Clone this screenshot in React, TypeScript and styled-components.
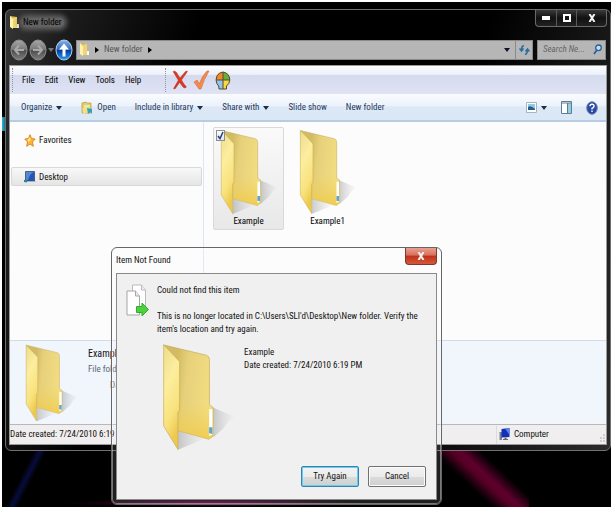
import React, { useId } from "react";
import styled, { createGlobalStyle } from "styled-components";

const GlobalStyle = createGlobalStyle`
  *, *::before, *::after { box-sizing: border-box; }
  body { margin: 0; background: #fff; }
  body, button, input { font-family: "Roboto Condensed", Roboto, "Liberation Sans", sans-serif; font-size: 9px; line-height: 13px; }
  button { padding: 0; border: 0; background: none; color: inherit; cursor: default; }
  svg { display: block; flex: none; }
`;

/* ---------- desktop and windows ---------- */

const Desktop = styled.div`
  position: relative;
  display: flex;
  min-height: 100vh;
  padding: 7px 0 56px 3px;
  border: 2px solid #fff;
  background:
    linear-gradient(90deg, #2ab4e0, transparent) 0 115px / 8px 14px no-repeat,
    radial-gradient(ellipse at center, rgba(130, 0, 90, 0.7), transparent 70%) 60px 100% / 300px 8px no-repeat,
    linear-gradient(117deg, transparent 42%, #080c3c 50%, transparent 58%) 0 100% / 50px 60px no-repeat,
    linear-gradient(43deg, transparent 34%, #560026 46%, #5e002c 52%, transparent 65%) 437px 100% / 90px 62px no-repeat,
    #000;
`;

const ExplorerWindow = styled.section`
  flex: 1;
  min-width: 0;
  display: flex;
  flex-direction: column;
  padding: 0 3px 5px;
  border: 1px solid #707070;
  border-radius: 6px;
  background: linear-gradient(105deg, #363636 0, #1c1c1c 60px, #000 190px, #000 470px, #101010 550px, #2c2c2c);
`;

const TitleBar = styled.header`
  display: flex;
  justify-content: space-between;
  height: 29px;
`;

const WindowTitle = styled.h1`
  display: flex;
  align-items: center;
  gap: 2px;
  height: 24px;
  margin: 0;
  font: inherit;
  color: #000;
  span {
    padding: 0 2px 0 1px;
    background: #626262;
    border-radius: 6px;
    box-shadow: 0 0 5px 3px #626262;
    line-height: 9px;
  }
`;

const CaptionButtons = styled.div`
  display: flex;
  height: 17px;
  border: 1px solid #6a6a6a;
  border-top: 0;
  border-radius: 0 0 4px 4px;
  background: linear-gradient(#3a3a3a, #111 50%, #222);
`;

const CaptionButton = styled.button<{ $wide?: boolean }>`
  display: grid;
  place-items: center;
  width: ${(p) => (p.$wide ? 30 : 20)}px;
  & + & { border-left: 1px solid #5a5a5a; }
`;

const NavBar = styled.nav`
  display: flex;
  align-items: center;
  height: 26px;
  padding: 0 1px 5px 1px;
`;

const AddressBox = styled.div`
  flex: 1;
  display: flex;
  align-items: center;
  gap: 5px;
  height: 20px;
  margin: 0 4px 0 2px;
  padding-left: 2px;
  border: 1px solid #8a8a8a;
  background: #b6b6b6;
  color: #555;
`;

const RefreshButton = styled.button`
  display: grid;
  place-items: center;
  width: 17px;
  height: 18px;
  border-left: 1px solid #8a8a8a;
`;

const Spacer = styled.div`
  flex: 1;
`;

const SearchBox = styled.label`
  display: flex;
  align-items: center;
  width: 69px;
  height: 20px;
  padding: 0 3px 0 5px;
  border: 1px solid #8a8a8a;
  background: #b6b6b6;
  input {
    flex: 1;
    min-width: 0;
    padding: 0;
    border: 0;
    outline: 0;
    background: none;
    font-style: italic;
  }
  input::placeholder { color: #666; opacity: 1; }
`;

const NavRound = styled.button`
  margin-right: 1px;
`;

const Client = styled.div`
  display: flex;
  flex-direction: column;
  border: 1px solid #9a9a9a;
  background: #fcfcfc;
`;

/* ---------- bars ---------- */

const MenuBar = styled.div`
  display: flex;
  align-items: center;
  height: 28px;
  padding-left: 2px;
  background: linear-gradient(#fbfcff 0, #edf0fa 30%, #d5dbee 34%, #dfe3f4 100%);
`;

const Grip = styled.i`
  width: 1px;
  height: 24px;
  border-left: 1px dotted #8d93a8;
`;

const MenuItems = styled.div`
  display: flex;
  gap: 10px;
  width: 152px;
  padding-left: 9px;
`;

const MenuTools = styled.div`
  display: flex;
  align-items: center;
  gap: 5px;
  padding-left: 6px;
`;

const CommandBar = styled.div`
  display: flex;
  align-items: center;
  justify-content: space-between;
  height: 28px;
  padding: 1px 8px 0 11px;
  border-bottom: 2px solid #b7cbe2;
  background: linear-gradient(#fafcff 0, #ebf2fb 45%, #dde8f6 50%, #dae7f5 100%);
  color: #1e395b;
`;

const CommandGroup = styled.div<{ $gap: number }>`
  display: flex;
  align-items: center;
  gap: ${(p) => p.$gap}px;
`;

const Command = styled.button`
  display: flex;
  align-items: center;
  gap: 4px;
  white-space: nowrap;
`;

/* ---------- panes ---------- */

const Panes = styled.div`
  display: flex;
  height: 218px;
`;

const Sidebar = styled.aside`
  display: flex;
  flex-direction: column;
  gap: 18px;
  width: 194px;
  padding: 8px 1px;
  border-right: 1px solid #dde7f2;
`;

const SideItem = styled.a<{ $selected?: boolean }>`
  display: flex;
  align-items: center;
  gap: 3px;
  height: 19px;
  padding: 1px 0 0 12px;
  border: 1px solid ${(p) => (p.$selected ? "#d9d9d9" : "transparent")};
  border-radius: 2px;
  background: ${(p) => (p.$selected ? "linear-gradient(#f8f8f8, #e5e5e5)" : "none")};
  color: #111;
  text-decoration: none;
`;

const FileList = styled.main`
  flex: 1;
  display: flex;
  align-items: flex-start;
  gap: 8px;
  padding: 5px 9px;
`;

const FileTile = styled.label<{ $selected?: boolean }>`
  position: relative;
  display: flex;
  flex-direction: column;
  width: 71px;
  height: 103px;
  padding: 1px 0 0 6px;
  border: 1px solid ${(p) => (p.$selected ? "#d9d9d9" : "transparent")};
  border-radius: 2px;
  background: ${(p) => (p.$selected ? "linear-gradient(#fafafa, #e8e8e8)" : "none")};
  span { margin-left: -6px; text-align: center; }
`;

const TileCheck = styled.input`
  position: absolute;
  top: 2px;
  left: 2px;
  width: 9px;
  height: 11px;
  margin: 0;
  appearance: none;
  border: 1px solid #8e8f8f;
  background: #f2f4f7 linear-gradient(#fff, #dfe3ea);
`;

const TileMark = styled.svg`
  position: absolute;
  top: 3px;
  left: 3px;
  pointer-events: none;
`;

const DetailsPane = styled.footer`
  display: flex;
  gap: 8px;
  height: 84px;
  padding: 1px 0 0 15px;
  border-top: 1px solid #cfdcea;
  background: #f1f5fc;
  color: #5a6779;
`;

const DetailsText = styled.dl`
  display: grid;
  align-content: start;
  gap: 3px;
  margin: 5px 0 0 2px;
  dt { font-size: 10px; color: #111; }
  dd { margin: 0; }
  dd + dd { padding-left: 22px; }
`;

const StatusBar = styled.div`
  display: flex;
  align-items: center;
  justify-content: space-between;
  height: 20px;
  border-top: 1px solid #b8b8b8;
  background: #f0eeee;
  color: #111;
`;

const StatusZone = styled.div`
  display: flex;
  align-items: center;
  gap: 3px;
  width: 110px;
  height: 18px;
  padding: 0 1px 0 2px;
  border-left: 1px solid #dcdada;
`;

/* ---------- dialog ---------- */

const Dialog = styled.section`
  position: absolute;
  top: 245px;
  left: 109px;
  width: 331px;
  padding: 0 4px 4px;
  border: 1px solid #666;
  border-radius: 6px;
  background: rgba(255, 255, 255, 0.12);
  box-shadow: inset 0 0 0 1px rgba(255, 255, 255, 0.4);
  color: #111;
`;

const DialogTitle = styled.header`
  display: flex;
  justify-content: space-between;
  height: 25px;
  h2 { margin: 6px 0 0; font: inherit; }
`;

const CloseButton = styled.button`
  display: grid;
  place-items: center;
  width: 32px;
  height: 17px;
  border: 1px solid #7a3a35;
  border-top: 0;
  border-radius: 0 0 4px 4px;
  background: linear-gradient(#e8a093 0, #d9705c 45%, #bf3119 50%, #d5583a 100%);
`;

const DialogBody = styled.div`
  display: grid;
  grid-template-columns: 23px 1fr;
  column-gap: 8px;
  padding: 10px 10px 12px 9px;
  border: 1px solid #8a8a8a;
  background: #f0f0f0;
`;

const Message = styled.div`
  p { margin: 0; }
  p + p { margin-top: 13px; }
`;

const ItemSummary = styled.div`
  grid-column: 1 / -1;
  display: flex;
  gap: 9px;
  padding: 7px 0 0 36px;
  dl { margin: 3px 0 0; }
  dd { margin: 0; }
`;

const Actions = styled.div`
  grid-column: 1 / -1;
  display: flex;
  justify-content: flex-end;
  gap: 9px;
  margin-top: 15px;
`;

const PushButton = styled.button<{ $primary?: boolean }>`
  width: 58px;
  height: 21px;
  border: 1px solid ${(p) => (p.$primary ? "#3c7fb1" : "#707070")};
  border-radius: 2px;
  box-shadow: inset 0 0 0 1px ${(p) => (p.$primary ? "#5fd0ee" : "#fcfcfc")};
  background: linear-gradient(#f3f3f3 0, #ebebeb 50%, #dcdcdc 50%, #cfcfcf 100%);
`;

/* ---------- drawings ---------- */

function Folder({ width }: { width: number }) {
  const id = useId().replace(/[^a-zA-Z0-9]/g, "");
  return (
    <svg width={width} viewBox="0 0 220 326" aria-hidden="true">
      <defs>
        <linearGradient id={id + "f"} x1="0" y1="0" x2=".3" y2="1">
          <stop offset="0" stopColor="#ecdc8c" />
          <stop offset=".4" stopColor="#fcee9e" />
          <stop offset=".75" stopColor="#f9e27e" />
          <stop offset="1" stopColor="#ecc94c" />
        </linearGradient>
        <linearGradient id={id + "b"} x1=".3" y1="0" x2="1" y2=".15">
          <stop offset="0" stopColor="#d2bb62" />
          <stop offset=".3" stopColor="#e6d07a" />
          <stop offset="1" stopColor="#f2dd82" />
        </linearGradient>
        <linearGradient id={id + "g"} x1="0" y1="0" x2="0" y2="1">
          <stop offset=".5" stopColor="#f0cf55" stopOpacity="0" />
          <stop offset="1" stopColor="#efc740" stopOpacity=".75" />
        </linearGradient>
        <linearGradient id={id + "s"} x1="0" y1="0" x2="1" y2="0">
          <stop offset="0" stopColor="#888" stopOpacity=".42" />
          <stop offset="1" stopColor="#bbb" stopOpacity=".04" />
        </linearGradient>
      </defs>
      <path d="M152 194L218 222L198 238L186 256L155 284Z" fill={`url(#${id}s)`} />
      <path d="M48 264L130 288L92 304L48 322Z" fill={`url(#${id}s)`} />
      <path d="M6 6L134 37Q143 40 143 50V186L154 194V281L141 290L48 264Z" fill={`url(#${id}b)`} stroke="#c2a95c" strokeWidth="2" />
      <path d="M48 60L142 60V186L154 194V281L141 290L48 264Z" fill={`url(#${id}g)`} />
      <path d="M142 200H152V276L142 280Z" fill="#fff" />
      <path d="M142 254H152V274L142 272Z" fill="#5ba6d0" />
      <path d="M5 5L53 56V203L48 209V321L5 250Z" fill={`url(#${id}f)`} stroke="#c6ac52" strokeWidth="2" />
    </svg>
  );
}

const FolderGlyph = () => (
  <svg width="11" height="15" viewBox="0 0 11 15" aria-hidden="true">
    <path d="M1 1L8 2V9L10 10V13L3 13Z" fill="#d8b748" />
    <path d="M8 9H10V13H8Z" fill="#fffbe0" />
    <path d="M1 1L4 4V14L1 12Z" fill="#fff2ae" />
    <path d="M4 3L8 2V13H4Z" fill="#efd574" />
  </svg>
);

const Round = ({ up, flip }: { up?: boolean; flip?: boolean }) => {
  const id = useId().replace(/[^a-zA-Z0-9]/g, "");
  return (
    <svg width="18" height="22" viewBox="0 0 18 22" aria-hidden="true">
      <defs>
        <linearGradient id={id} x1="0" y1="0" x2="0" y2="1">
          <stop offset="0" stopColor={up ? "#8fb4e8" : "#a8a8a8"} />
          <stop offset=".48" stopColor={up ? "#2c68c4" : "#777"} />
          <stop offset=".52" stopColor={up ? "#0839a0" : "#4c4c4c"} />
          <stop offset="1" stopColor={up ? "#1fa6f2" : "#808080"} />
        </linearGradient>
      </defs>
      <ellipse cx="9" cy="11" rx="8" ry="10" fill={`url(#${id})`} stroke={up ? "#b7d3f2" : "#8e8e8e"} />
      {up ? (
        <path d="M9 4.500L14 10.500H10.500V17.500H7.500V10.500H4Z" fill="#fff" />
      ) : (
        <path d={flip ? "M4 11H13M9 6.500L13 11L9 15.500" : "M14 11H5M9 6.500L5 11L9 15.500"} fill="none" stroke="#a8a8a8" strokeWidth="2" />
      )}
    </svg>
  );
};

const Down = ({ color = "#1b2f4d" }: { color?: string }) => (
  <svg width="6" height="4" viewBox="0 0 6 4" aria-hidden="true"><path d="M0 0H6L3 4Z" fill={color} /></svg>
);

const Right = () => (
  <svg width="4" height="6" viewBox="0 0 4 6" aria-hidden="true"><path d="M0 0L4 3L0 6Z" fill="#000" /></svg>
);

const Refresh = () => (
  <svg width="11" height="12" viewBox="0 0 11 12" aria-hidden="true">
    <path d="M5 1.500Q2.500 2 2.500 6M0.500 4.500L2.500 7L4.500 4.500M6 10.500Q8.500 10 8.500 5.500M6.500 7.500L8.500 5L10.500 7.500" fill="none" stroke="#2c6f9e" strokeWidth="1.500" />
  </svg>
);

const Magnifier = () => (
  <svg width="9" height="11" viewBox="0 0 9 11" aria-hidden="true">
    <circle cx="5.500" cy="3.800" r="2.800" fill="#c9dcec" stroke="#235f9c" strokeWidth="1.300" />
    <path d="M3.500 6.500L1 10" stroke="#235f9c" strokeWidth="1.700" />
  </svg>
);

const CrossIcon = () => (
  <svg width="16" height="20" viewBox="0 0 16 20" aria-hidden="true">
    <path d="M1 1.500Q4 0 6 5L8 8L13.500 1.500Q14.500 .5 15.500 1.500L9.500 10Q12 14.500 14.500 17Q12.500 19 11 17L7.600 12.500L3 19L1.500 18.500L6.300 10.300Q3.500 5.500 1 1.500Z" fill="#d63a26" stroke="#b52012" strokeWidth=".4" />
  </svg>
);

const TickIcon = () => (
  <svg width="17" height="20" viewBox="0 0 17 20" aria-hidden="true">
    <path d="M1 12L4 10L6.500 13.500Q9 6 14 1H16Q11 9 8 19H6Z" fill="#f08a50" stroke="#d96c34" strokeWidth=".6" />
  </svg>
);

const PaletteIcon = () => (
  <svg width="16" height="19" viewBox="0 0 16 19" aria-hidden="true">
    <path d="M8 1V9H1Q1 2 8 1Z" fill="#ee8a2c" />
    <path d="M8 1Q14.500 2 14.800 9H8Z" fill="#63b03a" />
    <path d="M1 9H8V18H4L3.500 15Q1 13 1 9Z" fill="#8fc4ee" />
    <path d="M8 9H14.800Q14 14 11.500 15V18H8Z" fill="#f7d944" />
    <path d="M8 1Q1.300 2 1.100 9Q1.200 13 3.700 15L4 18H11.500V15Q14.500 13 14.800 9Q14.500 2 8 1ZM8 1V18M1 9H15" fill="none" stroke="#5c4a2a" />
  </svg>
);

const OpenIcon = () => (
  <svg width="12" height="14" viewBox="0 0 12 14" aria-hidden="true">
    <path d="M1 2L5 1L6 2H10V12H1Z" fill="#eacb60" stroke="#b69a46" strokeWidth=".7" />
    <path d="M3 4H9V10H3Z" fill="#d9efc0" />
    <path d="M1.500 7L9 5V11L2 13Z" fill="#f4df8a" />
    <path d="M6 7L11 8V13L9.500 11L7 13Z" fill="#36a2b4" />
  </svg>
);

const ViewIcon = () => (
  <svg width="11" height="11" viewBox="0 0 11 11" aria-hidden="true">
    <path d="M.5.500H10.500V10.500H.5Z" fill="#fff" stroke="#a8b4c2" />
    <path d="M2 2H9V8H2Z" fill="#8fcbe4" />
    <path d="M2 5Q5 3 9 7V8H2Z" fill="#285e87" />
  </svg>
);

const PreviewIcon = () => (
  <svg width="11" height="13" viewBox="0 0 11 13" aria-hidden="true">
    <path d="M.5.500H10.500V12.500H.5Z" fill="#fff" stroke="#617b97" />
    <path d="M7 2H10V12H7Z" fill="#8fd0df" />
    <path d="M1 2H10M6.500 2V12" stroke="#617b97" />
  </svg>
);

const HelpIcon = () => (
  <svg width="12" height="14" viewBox="0 0 12 14" aria-hidden="true">
    <ellipse cx="6" cy="7" rx="5.300" ry="6.300" fill="#2748a6" stroke="#7c88a8" />
    <path d="M4 5.300Q4 3.300 6 3.300Q8.200 3.300 8 5.300Q7.800 6.500 6 7.300V8.500M6 9.500V11" fill="none" stroke="#fff" strokeWidth="1.400" />
  </svg>
);

const StarIcon = () => (
  <svg width="12" height="13" viewBox="0 0 11 13" aria-hidden="true">
    <path d="M5.500 .7L7 4.500L10.700 5L8 7.900L8.800 12.300L5.500 10L2.200 12.300L3 7.900L.3 5L4 4.500Z" fill="#ffb52e" stroke="#d8801e" strokeWidth=".9" />
    <path d="M5.500 3L6.200 6L4 8L3 6Z" fill="#ffe98c" />
  </svg>
);

const DesktopIcon = () => (
  <svg width="12" height="12" viewBox="0 0 12 12" aria-hidden="true">
    <path d="M1.500.500H10.500V10H1.500Z" fill="#2456b4" stroke="#38506e" strokeWidth=".8" />
    <path d="M2 1H10Q6 2 4 9H2Z" fill="#5686d8" />
    <path d="M2 10.500H11.500" stroke="#9fb6d0" />
    <path d="M0 9L3 8.500V11.500L0 11Z" fill="#2b8a88" />
  </svg>
);

const ComputerIcon = () => (
  <svg width="12" height="13" viewBox="0 0 12 13" aria-hidden="true">
    <path d="M.5 4H3V12H.5Z" fill="#7b8494" />
    <path d="M2.500 1L10.500 0V9L2.500 9.500Z" fill="#1230b8" />
    <path d="M6 .6L10.500 0V7Z" fill="#5b83f0" />
    <path d="M5.500 9.500H7.500V11H9V12H4V11H5.500Z" fill="#656d7a" />
  </svg>
);

const CopyIcon = () => (
  <svg width="23" height="33" viewBox="0 0 23 33" aria-hidden="true">
    <path d="M6.500 1H15.500L19.500 6V26H6.500Z" fill="#fff" stroke="#bbb" />
    <path d="M15.500 1V6H19.500" fill="#eee" stroke="#bbb" />
    <path d="M1 7H9.500L13.500 12V31H1Z" fill="#fff" stroke="#a5a5a5" />
    <path d="M9.500 7V12H13.500" fill="#eee" stroke="#a5a5a5" />
    <path d="M10.500 22.500H16V19L22.500 25.500L16 32V28.500H10.500Z" fill="#4fd040" stroke="#2fae2c" />
  </svg>
);

const CloseGlyph = () => (
  <svg width="8" height="8" viewBox="0 0 8 8" aria-hidden="true">
    <path d="M1.500 0L6.500 8M6.500 0L1.500 8" stroke="#f4f4f4" strokeWidth="2" />
  </svg>
);

/* ---------- page ---------- */

const menus = ["File", "Edit", "View", "Tools", "Help"];
const commands = [
  { label: "Organize", menu: true },
  { label: "Open", icon: <OpenIcon /> },
  { label: "Include in library", menu: true },
  { label: "Share with", menu: true },
  { label: "Slide show" },
  { label: "New folder" },
];

export default function App() {
  return (
    <>
      <GlobalStyle />
      <Desktop>
        <ExplorerWindow aria-label="New folder">
          <TitleBar>
            <WindowTitle><FolderGlyph /><span>New folder</span></WindowTitle>
            <CaptionButtons>
              <CaptionButton aria-label="Minimize">
                <svg width="8" height="4"><path d="M0 0H8V4H0Z" fill="#fff" /></svg>
              </CaptionButton>
              <CaptionButton aria-label="Maximize">
                <svg width="8" height="8"><path d="M1 1H7V7H1Z" fill="none" stroke="#fff" strokeWidth="2" /></svg>
              </CaptionButton>
              <CaptionButton aria-label="Close" $wide><CloseGlyph /></CaptionButton>
            </CaptionButtons>
          </TitleBar>
          <NavBar>
            <NavRound aria-label="Back"><Round /></NavRound>
            <NavRound aria-label="Forward"><Round flip /></NavRound>
            <NavRound aria-label="Recent pages"><Down color="#777" /></NavRound>
            <NavRound aria-label="Up"><Round up /></NavRound>
            <AddressBox>
              <FolderGlyph />
              <Right />
              <span>New folder</span>
              <Right />
              <Spacer />
              <Down color="#0c1230" />
              <RefreshButton aria-label="Refresh"><Refresh /></RefreshButton>
            </AddressBox>
            <SearchBox>
              <input aria-label="Search New folder" placeholder="Search Ne..." />
              <Magnifier />
            </SearchBox>
          </NavBar>
          <Client>
            <MenuBar>
              <Grip />
              <MenuItems>{menus.map((m) => <button key={m}>{m}</button>)}</MenuItems>
              <Grip />
              <MenuTools>
                <button aria-label="Delete"><CrossIcon /></button>
                <button aria-label="Apply"><TickIcon /></button>
                <button aria-label="Shell"><PaletteIcon /></button>
              </MenuTools>
            </MenuBar>
            <CommandBar>
              <CommandGroup $gap={19}>
                {commands.map((c) => (
                  <Command key={c.label}>{c.icon}{c.label}{c.menu && <Down />}</Command>
                ))}
              </CommandGroup>
              <CommandGroup $gap={14}>
                <Command aria-label="Change view"><ViewIcon /><Down /></Command>
                <Command aria-label="Preview pane"><PreviewIcon /></Command>
                <Command aria-label="Help"><HelpIcon /></Command>
              </CommandGroup>
            </CommandBar>
            <Panes>
              <Sidebar>
                <SideItem href="#favorites"><StarIcon />Favorites</SideItem>
                <SideItem href="#desktop" $selected><DesktopIcon />Desktop</SideItem>
              </Sidebar>
              <FileList>
                <FileTile $selected>
                  <Folder width={58} />
                  <TileCheck type="checkbox" defaultChecked />
                  <TileMark width="7" height="9" aria-hidden="true"><path d="M1 5L3 7.500L6 1" fill="none" stroke="#1f3f86" strokeWidth="1.500" /></TileMark>
                  <span>Example</span>
                </FileTile>
                <FileTile as="div">
                  <Folder width={58} />
                  <span>Example1</span>
                </FileTile>
              </FileList>
            </Panes>
            <DetailsPane>
              <Folder width={53} />
              <DetailsText>
                <dt>Example</dt>
                <dd>File folder</dd>
                <dd>Date modified:</dd>
              </DetailsText>
            </DetailsPane>
            <StatusBar>
              <span>Date created: 7/24/2010 6:19 PM</span>
              <StatusZone>
                <ComputerIcon />
                Computer
                <Spacer />
                <svg width="7" height="14" aria-hidden="true"><path d="M5 6H7V8H5ZM5 9H7V11H5ZM2 9H4V11H2ZM5 12H7V14H5ZM2 12H4V14H2Z" fill="#d0cece" /></svg>
              </StatusZone>
            </StatusBar>
          </Client>
        </ExplorerWindow>

        <Dialog role="dialog" aria-labelledby="dialog-title">
          <DialogTitle>
            <h2 id="dialog-title">Item Not Found</h2>
            <CloseButton aria-label="Close"><CloseGlyph /></CloseButton>
          </DialogTitle>
          <DialogBody>
            <CopyIcon />
            <Message>
              <p>Could not find this item</p>
              <p>This is no longer located in C:\Users\SLI'd\Desktop\New folder. Verify the item's location and try again.</p>
            </Message>
            <ItemSummary>
              <Folder width={73} />
              <dl>
                <dt>Example</dt>
                <dd>Date created: 7/24/2010 6:19 PM</dd>
              </dl>
            </ItemSummary>
            <Actions>
              <PushButton $primary>Try Again</PushButton>
              <PushButton>Cancel</PushButton>
            </Actions>
          </DialogBody>
        </Dialog>
      </Desktop>
    </>
  );
}
